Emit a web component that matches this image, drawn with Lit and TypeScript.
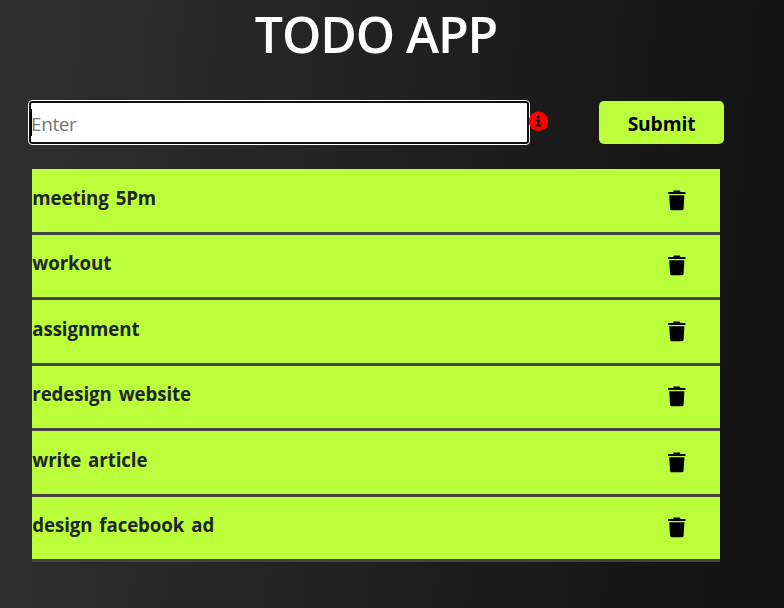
import { LitElement, html, css } from "lit";
import { customElement, state } from "lit/decorators.js";

@customElement("todo-item")
class TodoItem extends LitElement {
  static properties = { label: {} };
  declare label: string;

  static styles = css`
    :host {
      display: flex;
      justify-content: space-between;
      box-sizing: border-box;
      height: 65.5px;
      border-bottom: 3px solid #444;
      background: #bbff3a;
      color: #212529;
    }
    .label {
      margin: 13.7px 0 0 0.3px;
      font-size: 18.7px;
      font-weight: 700;
      line-height: 30px;
      letter-spacing: -0.1px;
      word-spacing: 2.2px;
      white-space: nowrap;
    }
    .remove {
      width: 18px;
      height: 21px;
      margin: 20.7px 34.5px 0 0;
      padding: 0;
      border: 0;
      background: none;
    }
    svg {
      display: block;
    }
  `;

  render() {
    return html`
      <span class="label">${this.label}</span>
      <button class="remove" aria-label="Delete">
        <svg width="18" height="21" viewBox="0 0 18 21">
          <path d="M5.4 1.9V1q0-.6.6-.6h5.6q.6 0 .6.6v.9h4.7q.7 0 .7.7v.7q0 .7-.7.7H.7Q0 4 0 3.300V2.600q0-.7.7-.7zM1.200 5.300h15.200l-.8 13.500q-.1 1.500-1.600 1.500H3.700q-1.500 0-1.600-1.500z" />
        </svg>
      </button>
    `;
  }
}

@customElement("app-root")
class AppRoot extends LitElement {
  @state() items = [
    "meeting 5Pm",
    "workout",
    "assignment",
    "redesign website",
    "write article",
    "design facebook ad",
  ];

  static styles = css`
    :host {
      display: block;
      box-sizing: border-box;
      height: 608px;
      padding: 0 60px 0 28px;
      overflow: hidden;
      background: linear-gradient(95deg, #303030, #111);
      font-family: "Open Sans", "Noto Sans", sans-serif;
    }
    h1 {
      margin: 0;
      height: 100px;
      color: #fff;
      font-size: 50px;
      font-weight: 600;
      line-height: 68px;
      letter-spacing: -1.1px;
      text-align: center;
      white-space: nowrap;
    }
    form {
      display: flex;
      align-items: flex-start;
      height: 69px;
    }
    .field {
      display: flex;
      align-items: center;
      box-sizing: border-box;
      width: 502px;
      height: 45px;
      border: 1px solid #fff;
      border-radius: 4px;
      background: #101010;
      padding: 2px;
    }
    .inner {
      display: flex;
      align-items: center;
      width: 100%;
      height: 39px;
      background: #fff;
      border-radius: 1px;
    }
    .caret {
      width: 1px;
      height: 27px;
      margin-right: -1px;
      background: #000;
    }
    .placeholder {
      color: #757575;
      font-size: 19px;
      line-height: 30px;
      letter-spacing: -0.4px;
      padding-top: 2px;
    }
    .info {
      display: block;
      margin: 11.400px 0 0 -2px;
    }
    .submit {
      width: 125px;
      height: 43px;
      margin: 1px 0 0 51px;
      padding: 2px 0 0;
      border: 0;
      border-radius: 5px;
      background: #bbff3a;
      color: #000;
      font: 700 19.2px "Open Sans", sans-serif;
      letter-spacing: -0.1px;
    }
    .list {
      margin: 0 4px;
    }
  `;

  render() {
    return html`
      <h1>TODO APP</h1>
      <form>
        <div class="field">
          <div class="inner">
            <span class="caret"></span>
            <span class="placeholder">Enter</span>
          </div>
        </div>
        <svg class="info" width="20" height="20" viewBox="0 0 20 20">
          <circle cx="10.500" cy="10.300" r="9.700" fill="#f00" />
          <path d="M8.800 5h2.800v2.400H8.800zM7.700 8.600h4v5.200h1.600v1.800H7.500v-1.800h1.700v-3.400H7.700z" fill="#111" />
        </svg>
        <button class="submit" type="button">Submit</button>
      </form>
      <div class="list">
        ${this.items.map((item) => html`<todo-item .label=${item}></todo-item>`)}
      </div>
    `;
  }
}
